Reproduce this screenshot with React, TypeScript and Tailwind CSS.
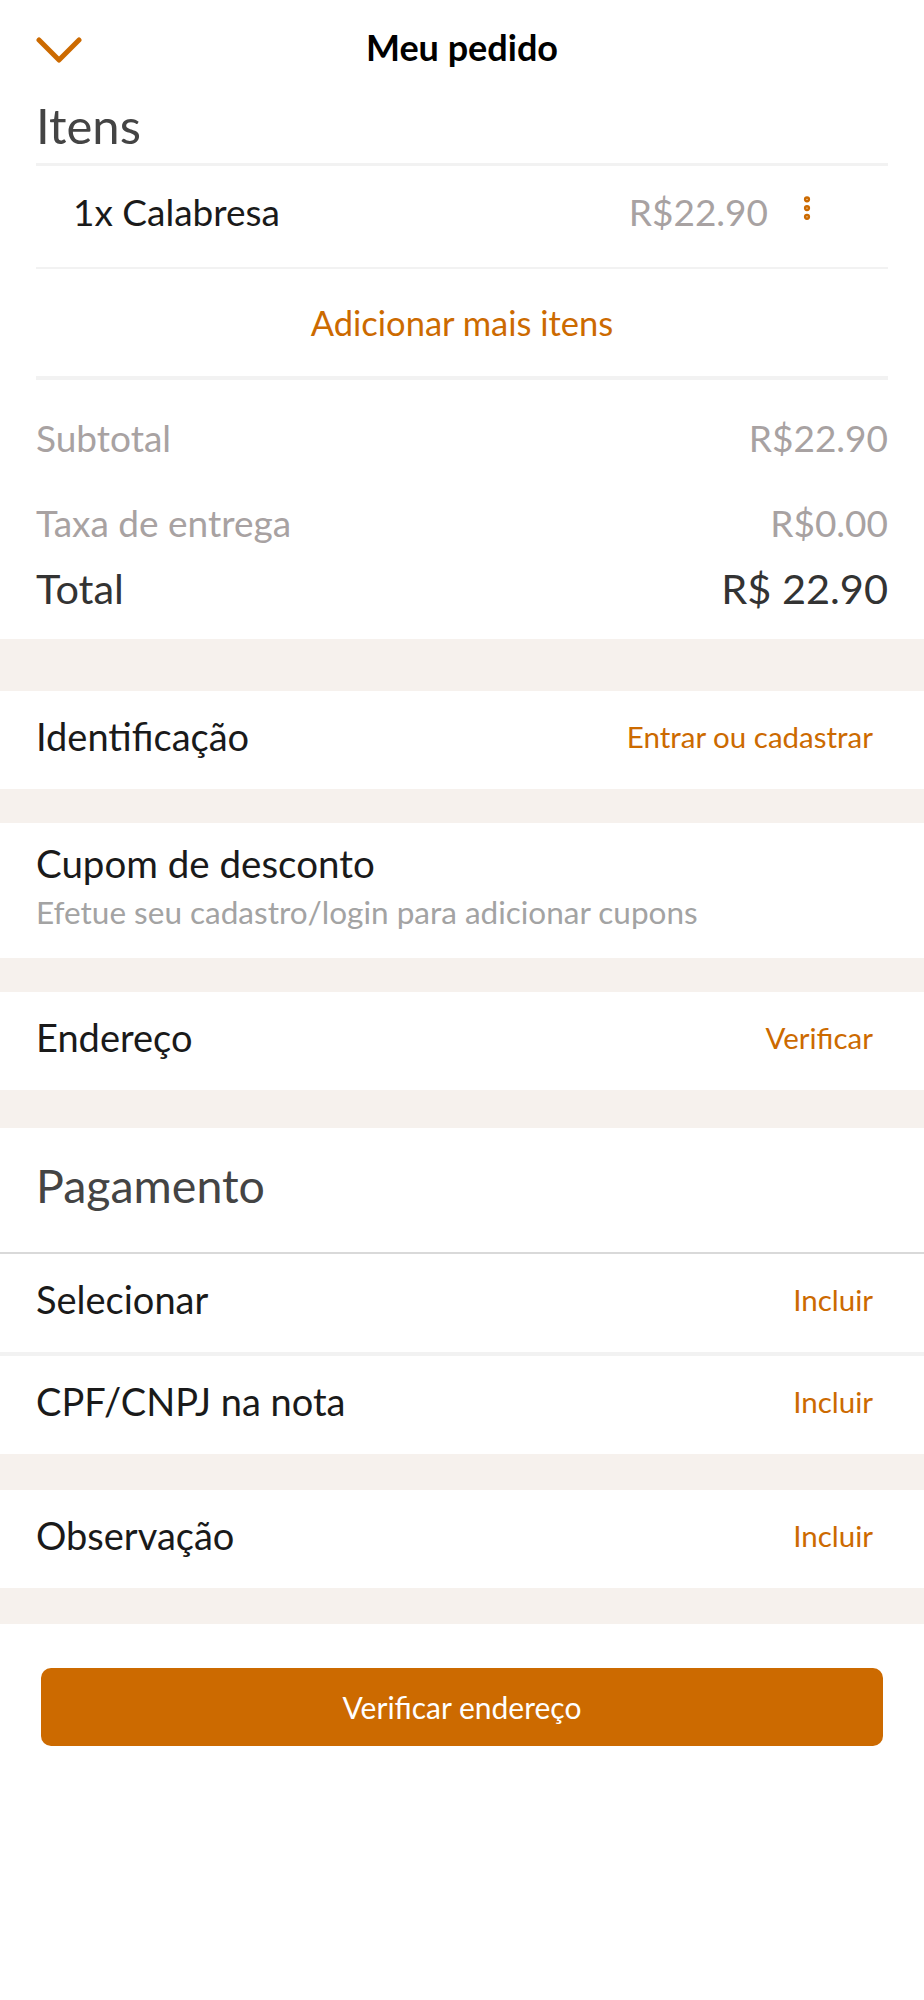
import { MoreVertical } from "lucide-react";

const orange = "text-[#cc6a00]";

function Band({ h }: { h: string }) {
  return <div className={`${h} bg-[#f6f1ed]`} />;
}

function ActionRow({ label, action }: { label: string; action: string }) {
  return (
    <div className="flex h-[98px] items-center justify-between bg-white pb-[7px] pl-[36px] pr-[51px]">
      <span className="text-[38px] leading-[1.2] text-[#1a1a1a]">{label}</span>
      <span className={`text-[29.5px] leading-[1.2] ${orange}`}>{action}</span>
    </div>
  );
}

export default function App() {
  return (
    <div className="min-h-[2000px] bg-white font-['Lato',sans-serif]">
      <header className="relative flex h-[96px] items-center justify-center">
        <svg
          className="absolute left-[36px] top-[37px]"
          width="46"
          height="27"
          viewBox="0 0 46 27"
          fill="none"
        >
          <path d="M3 3L23 23L43 3" stroke="#cc6a00" strokeWidth="5" strokeLinecap="round" strokeLinejoin="round" />
        </svg>
        <h1 className="text-[36px] font-bold leading-[1.2] text-black">Meu pedido</h1>
      </header>

      <section className="px-[36px]">
        <h2 className="h-[67px] text-[49px] leading-[58px] text-[#444]">Itens</h2>
        <div className="h-[3px] bg-[#f2f2f2]" />
        <div className="flex h-[101px] items-start pt-[24px]">
          <span className="ml-[37px] flex-1 text-[37px] leading-[1.2] text-[#1a1a1a]">1x Calabresa</span>
          <span className="text-[37px] leading-[1.2] text-[#a8a2a2]">R$22.90</span>
          <MoreVertical className="ml-[24px] mr-[66px] mt-[3px] text-[#cc6a00]" size={30} strokeWidth={3} />
        </div>
        <div className="h-[2px] bg-[#f2f2f2]" />
        <div className={`flex h-[107px] items-center justify-center text-[34.5px] leading-[1.2] ${orange}`}>
          Adicionar mais itens
        </div>
        <div className="h-[4px] bg-[#f2f2f2]" />
        <div className="flex h-[116px] items-center justify-between text-[37px] leading-[1.2] text-[#a8a2a2]">
          <span>Subtotal</span>
          <span>R$22.90</span>
        </div>
        <div className="flex h-[54px] items-center justify-between text-[37px] leading-[1.2] text-[#a8a2a2]">
          <span>Taxa de entrega</span>
          <span>R$0.00</span>
        </div>
        <div className="flex h-[78px] items-center justify-between text-[41.5px] leading-[1.2] text-[#333]">
          <span>Total</span>
          <span>R$ 22.90</span>
        </div>
        <div className="h-[11px]" />
      </section>

      <Band h="h-[52px]" />
      <ActionRow label="Identificação" action="Entrar ou cadastrar" />
      <Band h="h-[34px]" />
      <div className="flex h-[135px] flex-col bg-white px-[36px] pt-[17px]">
        <span className="text-[38.5px] leading-[1.2] text-[#1a1a1a]">Cupom de desconto</span>
        <span className="mt-[8px] text-[31.5px] leading-[1.2] text-[#a3a3a3]">
          Efetue seu cadastro/login para adicionar cupons
        </span>
      </div>
      <Band h="h-[34px]" />
      <ActionRow label="Endereço" action="Verificar" />
      <Band h="h-[38px]" />

      <div className="flex h-[124px] items-center px-[36px] pb-[8px]">
        <span className="text-[46.5px] leading-[1.2] text-[#444]">Pagamento</span>
      </div>
      <div className="h-[2px] bg-[#d9d9d9]" />
      <ActionRow label="Selecionar" action="Incluir" />
      <div className="h-[4px] bg-[#f2f2f2]" />
      <ActionRow label="CPF/CNPJ na nota" action="Incluir" />
      <Band h="h-[36px]" />
      <ActionRow label="Observação" action="Incluir" />
      <Band h="h-[36px]" />

      <div className="px-[41px] pt-[44px]">
        <button className="flex h-[78px] w-full items-center justify-center rounded-[10px] bg-[#cc6a00] text-[30px] leading-[1.2] text-white">
          Verificar endereço
        </button>
      </div>
    </div>
  );
}
